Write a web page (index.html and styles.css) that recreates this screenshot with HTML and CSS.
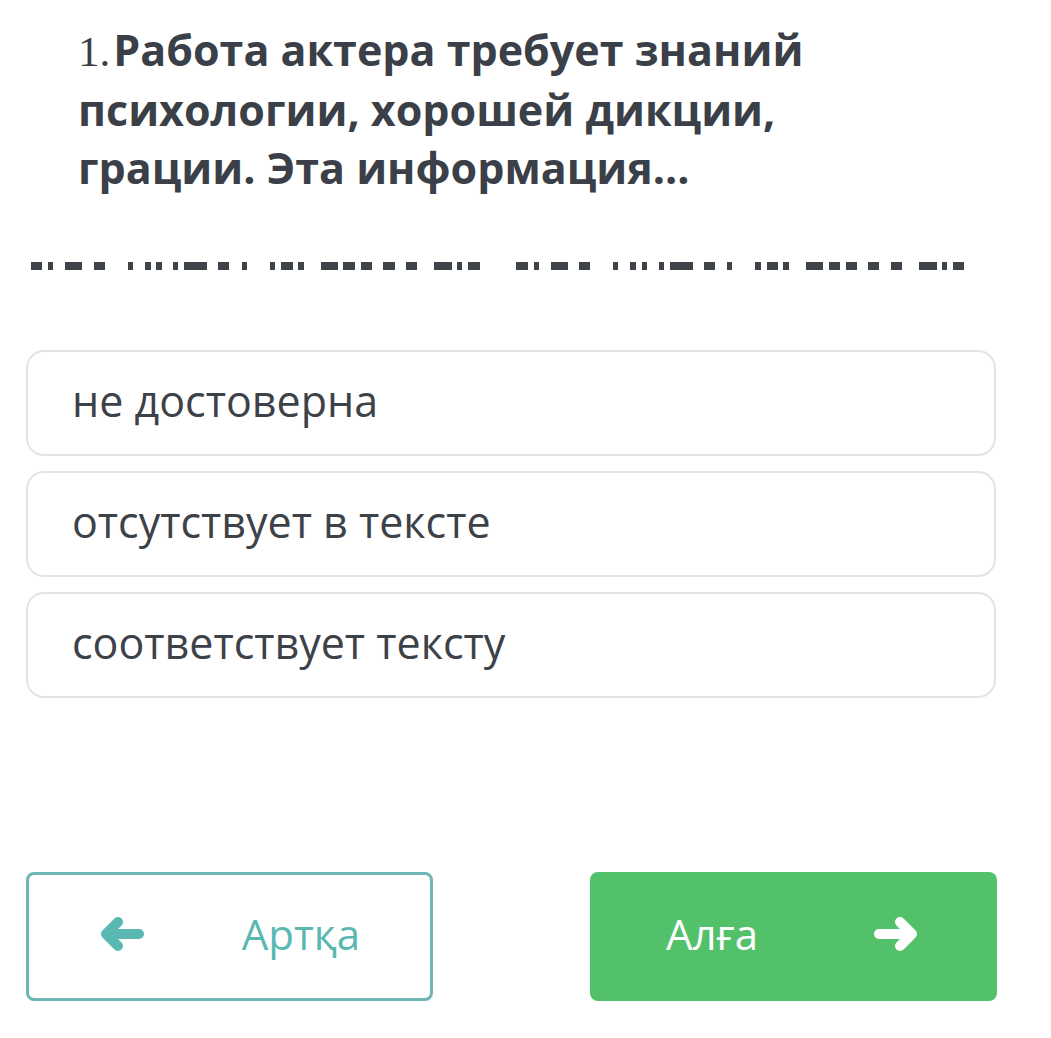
FILE: index.html
```html
<!DOCTYPE html>
<html>
  <head>
    <meta charset="UTF-8" />
    <title>Тест</title>
    <link rel="stylesheet" href="styles.css">
  </head>
  <body>
    <div class="page">
      <h1 class="question"><span class="num">1.</span><span class="text">Работа актера требует знаний психологии, хорошей дикции, грации. Эта информация...</span></h1>

      <!-- cut-off line of text under the question -->
      <svg class="strip" width="1051" height="8" viewBox="0 0 1051 8">
        <g fill="#3f434a">
          <rect x="31" y="0" width="11" height="8"/><rect x="48" y="0" width="5" height="8"/>
          <rect x="65" y="0" width="17" height="8"/><rect x="94" y="0" width="11" height="8"/>
          <rect x="128" y="0" width="5" height="8"/><rect x="145" y="0" width="6" height="8"/>
          <rect x="156" y="0" width="6" height="8"/><rect x="173" y="0" width="5" height="8"/>
          <rect x="184" y="0" width="23" height="8"/><rect x="218" y="0" width="11" height="8"/>
          <rect x="242" y="0" width="5" height="8"/><rect x="270" y="0" width="5" height="8"/>
          <rect x="281" y="0" width="12" height="8"/><rect x="298" y="0" width="6" height="8"/>
          <rect x="321" y="0" width="17" height="8"/><rect x="343" y="0" width="12" height="8"/>
          <rect x="361" y="0" width="11" height="8"/><rect x="383" y="0" width="12" height="8"/>
          <rect x="406" y="0" width="11" height="8"/><rect x="434" y="0" width="18" height="8"/>
          <rect x="457" y="0" width="5" height="8"/><rect x="468" y="0" width="12" height="8"/>
          <rect x="516" y="0" width="12" height="8"/><rect x="534" y="0" width="5" height="8"/>
          <rect x="551" y="0" width="17" height="8"/><rect x="579" y="0" width="11" height="8"/>
          <rect x="613" y="0" width="5" height="8"/><rect x="630" y="0" width="6" height="8"/>
          <rect x="642" y="0" width="5" height="8"/><rect x="659" y="0" width="5" height="8"/>
          <rect x="670" y="0" width="23" height="8"/><rect x="704" y="0" width="11" height="8"/>
          <rect x="727" y="0" width="5" height="8"/><rect x="755" y="0" width="6" height="8"/>
          <rect x="767" y="0" width="11" height="8"/><rect x="783" y="0" width="6" height="8"/>
          <rect x="806" y="0" width="17" height="8"/><rect x="829" y="0" width="11" height="8"/>
          <rect x="846" y="0" width="11" height="8"/><rect x="868" y="0" width="11" height="8"/>
          <rect x="891" y="0" width="11" height="8"/><rect x="919" y="0" width="18" height="8"/>
          <rect x="942" y="0" width="5" height="8"/><rect x="953" y="0" width="11" height="8"/>
        </g>
      </svg>

      <div class="answers">
        <div class="answer">не достоверна</div>
        <div class="answer">отсутствует в тексте</div>
        <div class="answer">соответствует тексту</div>
      </div>

      <div class="nav">
        <button class="btn btn-back">
          <svg class="arrow" width="44" height="34" viewBox="0 0 44 34">
            <path d="M39 17 H6 M18 5 L6 17 L18 29" fill="none" stroke="#5ab8b2" stroke-width="10" stroke-linecap="round" stroke-linejoin="round"/>
          </svg>
          <span>Артқа</span>
        </button>
        <button class="btn btn-next">
          <span>Алға</span>
          <svg class="arrow" width="44" height="34" viewBox="0 0 44 34">
            <path d="M5 17 H38 M26 5 L38 17 L26 29" fill="none" stroke="#ffffff" stroke-width="10" stroke-linecap="round" stroke-linejoin="round"/>
          </svg>
        </button>
      </div>
    </div>
  </body>
</html>
```

FILE: styles.css
```css
/* page */
body {
  margin: 0;
  padding: 0;
  background: #ffffff;
  font-family: "Open Sans", "Noto Sans", sans-serif;
  color: #3c4048;
}
.page {
  display: flex;
  flex-direction: column;
}

/* question */
.question {
  margin: 21px 180px 0 78px;
  font-size: 43px;
  line-height: 58px;
  font-weight: 700;
  color: #3a3f48;
}
.question .num {
  display: inline-block;
  font-family: "Liberation Serif", serif;
  font-weight: 400;
  margin-right: 3px;
}
.strip {
  display: block;
  margin-top: 65px;
}

/* answers */
.answers {
  display: flex;
  flex-direction: column;
  gap: 15px;
  margin: 80px 55px 0 26px;
}
.answer {
  display: flex;
  align-items: center;
  padding: 0 0 6px 44px;
  box-sizing: border-box;
  height: 106px;
  border: 2px solid #e1e5e5;
  border-radius: 18px;
  font-size: 43px;
  color: #3d4148;
}

/* navigation buttons */
.nav {
  display: flex;
  justify-content: space-between;
  margin: 174px 54px 0 26px;
}
.btn {
  width: 407px;
  height: 129px;
  box-sizing: border-box;
  display: flex;
  align-items: center;
  justify-content: space-between;
  border-radius: 8px;
  font-family: "Open Sans", "Noto Sans", sans-serif;
  font-size: 42px;
  cursor: pointer;
}
.btn-back {
  background: #ffffff;
  border: 3px solid #6db6b5;
  color: #5ab8b2;
  padding: 0 70px 6px 71px;
}
.btn-next {
  background: #52c16a;
  border: none;
  color: #ffffff;
  padding: 0 79px 6px 76px;
}
.arrow {
  display: block;
  flex-shrink: 0;
}
```
